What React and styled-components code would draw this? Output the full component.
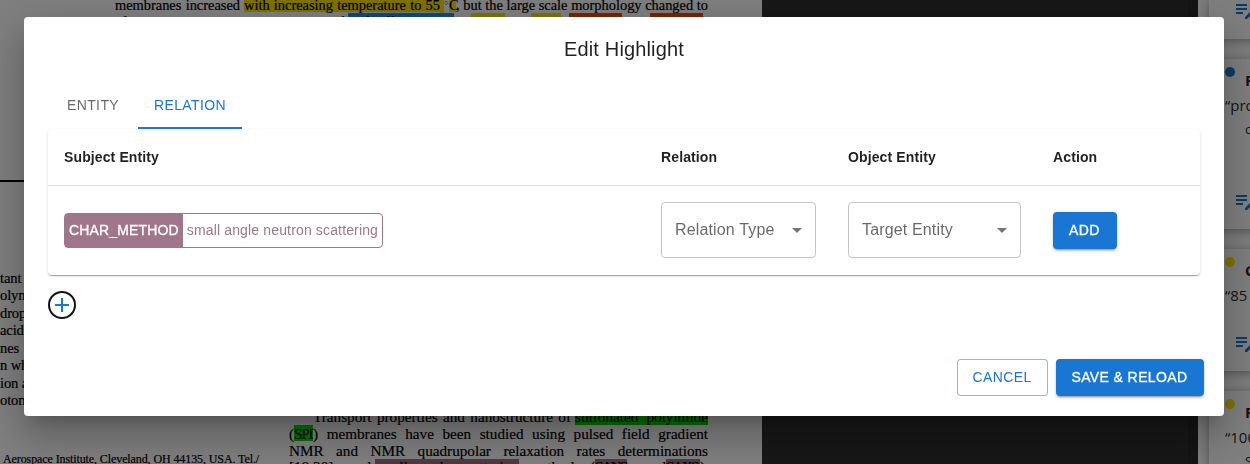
import React from "react";
import styled, { createGlobalStyle } from "styled-components";

const GlobalStyle = createGlobalStyle`
  *, *::before, *::after { box-sizing: border-box; }
  body {
    margin: 0;
    overflow: hidden;
    font-family: "Liberation Sans", Arial, sans-serif;
    color: rgba(0, 0, 0, 0.87);
  }
`;

/* ---------- document viewer behind the dialog ---------- */

const Workspace = styled.div`
  display: flex;
  height: 464px;
  overflow: hidden;
`;

const PaperPage = styled.div`
  flex: none;
  display: flex;
  flex-direction: column;
  width: 762px;
  height: 464px;
  overflow: hidden;
  background: #fff;
  color: #000;
  font-family: "Liberation Serif", "Times New Roman", serif;
  font-size: 14.4px;
  -webkit-text-stroke: 0.2px #000;
`;

const Abstract = styled.div`
  flex: none;
  width: 600px;
  height: 180px;
  margin-left: 115px;
  overflow: hidden;
`;

const Rule = styled.div`
  flex: none;
  height: 2px;
  background: #000;
`;

const Columns = styled.div`
  display: flex;
  justify-content: space-between;
  width: 708px;
`;

const LeftColumn = styled.div`
  width: 260px;
  padding-top: 87px;
  font-size: 14.6px;
`;

const RightColumn = styled.div`
  width: 419px;
  padding-top: 226px;
  font-size: 15.2px;
`;

const Line = styled.div`
  display: flex;
  height: ${(p) => p.$h || 17}px;
  line-height: ${(p) => p.$lh || 17}px;
  padding-left: ${(p) => p.$indent || 0}px;
  white-space: nowrap;
`;

const Seg = styled.span`
  flex: none;
  width: ${(p) => p.$w}px;
  height: ${(p) => p.$mh || 17}px;
  white-space: pre-wrap;
  text-align: justify;
  text-align-last: justify;
  letter-spacing: ${(p) => p.$ls || 0}px;
  background: ${(p) => p.$mark || "none"};
`;

const Degree = styled(Seg)`
  font-size: 7px;
  line-height: 7px;
  -webkit-text-stroke: 0;
`;

const Fragment = styled.div`
  height: 17.45px;
  line-height: 18.5px;
  white-space: pre;
  letter-spacing: -0.15px;
`;

const Affiliation = styled.div`
  margin-top: 42px;
  padding-left: 3px;
  width: 259px;
  font-size: 12px;
  letter-spacing: -0.1px;
  line-height: 17px;
  white-space: nowrap;
`;

const ViewerGutter = styled.div`
  flex: none;
  width: 436px;
  background: linear-gradient(90deg, #2e2e2e 426px, #282828 426px);
`;

const Sidebar = styled.div`
  flex: 1;
  display: flex;
  flex-direction: column;
  gap: 20px;
  padding-left: 11px;
  background: #fff;
  overflow: hidden;
  font-family: "Open Sans", "Noto Sans", sans-serif;
`;

const NoteCard = styled.div`
  flex: none;
  display: flex;
  flex-direction: column;
  width: 200px;
  height: ${(p) => p.$h}px;
  padding: 8px 0 0 16px;
  background: #fff;
  box-shadow: 0 2px 10px rgba(0, 0, 0, 0.36);
  overflow: hidden;
`;

const NoteDot = styled.div`
  flex: none;
  width: 10px;
  height: 10px;
  border-radius: 50%;
  background: ${(p) => p.$color};
`;

const NoteType = styled.div`
  padding-left: 20px;
  margin-top: -7px;
  font-size: 15px;
  font-weight: 700;
  line-height: 20px;
`;

const NoteQuote = styled.div`
  margin-top: 5px;
  font-size: 15px;
  line-height: 20px;
`;

const NoteMeta = styled.div`
  margin-top: 5px;
  padding-left: 20px;
  font-size: 13px;
  line-height: 18px;
`;

const NoteIcon = styled.svg`
  display: block;
  flex: none;
  width: 24px;
  height: 24px;
  margin: ${(p) => p.$top}px 0 0 8px;
  fill: #1976d2;
`;

/* ---------- dialog ---------- */

const Backdrop = styled.div`
  position: fixed;
  inset: 0;
  display: flex;
  align-items: flex-start;
  padding: 17px 26px 0 24px;
  background: rgba(0, 0, 0, 0.5);
`;

const Dialog = styled.div`
  display: flex;
  flex-direction: column;
  width: 1200px;
  height: 399px;
  border-radius: 4px;
  background: #fff;
  box-shadow:
    0 11px 15px -7px rgba(0, 0, 0, 0.2),
    0 24px 38px 3px rgba(0, 0, 0, 0.14),
    0 9px 46px 8px rgba(0, 0, 0, 0.12);
`;

const Title = styled.h2`
  margin: 0;
  padding: 16px 24px;
  font-size: 20px;
  font-weight: 400;
  line-height: 32px;
  letter-spacing: 0.15px;
  text-align: center;
`;

const Content = styled.div`
  flex: 1;
  padding: 0 24px;
`;

const Tabs = styled.div`
  display: flex;
  height: 48px;
`;

const Tab = styled.button`
  width: ${(p) => p.$w}px;
  padding: 2px 0 0;
  border: 0;
  border-bottom: 2px solid ${(p) => (p.$active ? "#1976d2" : "transparent")};
  background: none;
  color: ${(p) => (p.$active ? "#1976d2" : "rgba(0, 0, 0, 0.6)")};
  font: 400 14px/20px "Liberation Sans", Arial, sans-serif;
  letter-spacing: 0.4px;
`;

const TableCard = styled.div`
  border-radius: 4px;
  background: #fff;
  box-shadow:
    0 2px 1px -1px rgba(0, 0, 0, 0.2),
    0 1px 1px 0 rgba(0, 0, 0, 0.14),
    0 1px 3px 0 rgba(0, 0, 0, 0.12);
`;

const Row = styled.div`
  display: grid;
  grid-template-columns: 597px 187px 205px 163px;
  align-items: center;
  height: ${(p) => (p.$head ? 57 : 89)}px;
  border-bottom: ${(p) => (p.$head ? "1px solid #e0e0e0" : "0")};
`;

const HeadCell = styled.div`
  padding: 0 16px;
  font-size: 14px;
  font-weight: 700;
  line-height: 24px;
  letter-spacing: 0.12px;
`;

const Cell = styled.div`
  display: flex;
  align-items: center;
  height: 88px;
  padding: 0 16px;
  align-self: start;
`;

const EntityChip = styled.div`
  display: flex;
  height: 35px;
  margin-top: 1px;
  border: 1px solid #a0768a;
  border-radius: 4px;
  color: #a0768a;
  font-size: 14px;
  line-height: 33px;
  letter-spacing: 0.15px;
  white-space: nowrap;
`;

const ChipLabel = styled.span`
  padding: 0 4px;
  background: #a0768a;
  color: #fff;
  -webkit-text-stroke: 0.3px #fff;
`;

const ChipText = styled.span`
  padding: 0 4px;
`;

const Select = styled.div`
  display: flex;
  align-items: center;
  justify-content: space-between;
  width: ${(p) => p.$w}px;
  height: 56px;
  padding: 0 6px 0 13px;
  border: 1px solid rgba(0, 0, 0, 0.23);
  border-radius: 4px;
  color: rgba(0, 0, 0, 0.6);
  font-size: 16px;
  letter-spacing: 0.15px;
  white-space: nowrap;
`;

const Arrow = styled.svg`
  width: 24px;
  height: 24px;
  fill: rgba(0, 0, 0, 0.54);
`;

const Button = styled.button`
  width: ${(p) => p.$w}px;
  height: 37px;
  padding: 0 1px ${(p) => (p.$compact ? 0 : 2)}px 0;
  border: ${(p) => (p.$outlined ? "1px solid rgba(25, 118, 210, 0.5)" : "0")};
  border-radius: 4px;
  background: ${(p) => (p.$outlined ? "#fff" : "#1976d2")};
  color: ${(p) => (p.$outlined ? "#1976d2" : "#fff")};
  font: 400 14px/24px "Liberation Sans", Arial, sans-serif;
  letter-spacing: 0.4px;
  white-space: nowrap;
  -webkit-text-stroke: ${(p) => (p.$outlined ? "0" : "0.3px #fff")};
  box-shadow: ${(p) =>
    p.$outlined
      ? "none"
      : "0 3px 1px -2px rgba(0,0,0,.2), 0 2px 2px 0 rgba(0,0,0,.14), 0 1px 5px 0 rgba(0,0,0,.12)"};
`;

const AddRow = styled.button`
  display: flex;
  align-items: center;
  justify-content: center;
  width: 28px;
  height: 28px;
  margin-top: 16px;
  padding: 0;
  border: 2px solid #101418;
  border-radius: 50%;
  background: #fff;
`;

const Actions = styled.div`
  display: flex;
  justify-content: flex-end;
  gap: 8px;
  padding: 20px;
`;

const YELLOW = "#ffe600";
const BLUE = "#1e90ff";
const ORANGE = "#ff4500";
const GREEN = "#00e000";
const MAUVE = "#a0768a";

const fragments = ["tant", "olyn", "drop", "acidi", "nes  i", "n wh", "ion a", "oton"];

const EditNote = ({ top }) => (
  <NoteIcon $top={top} viewBox="0 0 24 24">
    <path d="M3 10h11v2H3v-2zm0-2h11V6H3v2zm0 8h7v-2H3v2zm15.01-3.13.71-.71c.39-.39 1.02-.39 1.41 0l.71.71c.39.39.39 1.02 0 1.41l-.71.71-2.12-2.12zm-.71.71-5.3 5.3V21h2.12l5.3-5.3-2.12-2.12z" />
  </NoteIcon>
);

const Dropdown = ({ label, width }) => (
  <Select $w={width}>
    {label}
    <Arrow viewBox="0 0 24 24">
      <path d="M7 10l5 5 5-5z" />
    </Arrow>
  </Select>
);

const Document = () => (
  <PaperPage>
    <Abstract>
      <Line $h={13} $lh={10}>
        <Seg $w={125}>membranes increased</Seg>
        <Seg $w={4} />
        <Seg $w={196} $mh={12} $mark={YELLOW}>with increasing temperature to 55</Seg>
        <Seg $w={4} $mh={13} $mark={YELLOW} />
        <Degree $w={5}>○</Degree>
        <Seg $w={7} $mh={12} $ls={-3} $mark={YELLOW}>C</Seg>
        <Seg $w={252}>, but the large scale morphology changed to</Seg>
      </Line>
      <Line $h={20} $lh={18}>
        <Seg $w={229}>after the reach. During the course of the</Seg>
        <Seg $w={4} />
        <Seg $w={106} $mark={BLUE}>self-diffusion ion</Seg>
        <Seg $w={17} />
        <Seg $w={34} $ls={-0.5} $mark={YELLOW}>55.2%</Seg>
        <Seg $w={26}> and</Seg>
        <Seg $w={30} $ls={-1.4} $mark={YELLOW}>71.8%</Seg>
        <Seg $w={8}> (</Seg>
        <Seg $w={53} $mark={ORANGE} $ls={-1.8}>SPTES-70</Seg>
        <Seg $w={28}> and</Seg>
        <Seg $w={53} $mark={ORANGE} $ls={-1.8}>SPTES-80</Seg>
        <Seg $w={5}>)</Seg>
      </Line>
    </Abstract>
    <Rule />
    <Columns>
      <LeftColumn>
        {fragments.map((text) => (
          <Fragment key={text}>{text}</Fragment>
        ))}
        <Affiliation>Aerospace Institute, Cleveland, OH 44135, USA. Tel./</Affiliation>
      </LeftColumn>
      <RightColumn>
        <Line $indent={24}>
          <Seg $w={258}>Transport properties and nanostructure of</Seg>
          <Seg $w={4} />
          <Seg $w={133} $mark={GREEN}>sulfonated polyimide</Seg>
        </Line>
        <Line>
          <Seg $w={5}>(</Seg>
          <Seg $w={19} $mark={GREEN} $mh={16} $ls={-1.2}>SPI</Seg>
          <Seg $w={395}>) membranes have been studied using pulsed field gradient</Seg>
        </Line>
        <Line>
          <Seg $w={419}>NMR and NMR quadrupolar relaxation rates determinations</Seg>
        </Line>
        <Line $lh={16}>
          <Seg $w={82}>[19,20] and</Seg>
          <Seg $w={4} />
          <Seg $w={144} $mark={MAUVE}>small angle scattering</Seg>
          <Seg $w={76}> methods (</Seg>
          <Seg $w={32} $mark={MAUVE} $ls={-1.8}>SANS</Seg>
          <Seg $w={39}> and</Seg>
          <Seg $w={34} $mark={MAUVE} $ls={-1.8}>SAXS</Seg>
          <Seg $w={5}>)</Seg>
        </Line>
      </RightColumn>
    </Columns>
  </PaperPage>
);

const Notes = () => (
  <Sidebar>
    <NoteCard $h={39}>
      <EditNote top={-10} />
    </NoteCard>
    <NoteCard $h={170}>
      <NoteDot $color="#1976d2" />
      <NoteType>PROPERTY</NoteType>
      <NoteQuote>“proton conductivity”</NoteQuote>
      <NoteMeta>conductivity</NoteMeta>
      <EditNote top={51} />
    </NoteCard>
    <NoteCard $h={122}>
      <NoteDot $color={YELLOW} />
      <NoteType>CONDITION</NoteType>
      <NoteQuote>“85 °C”</NoteQuote>
      <EditNote top={26} />
    </NoteCard>
    <NoteCard $h={170}>
      <NoteDot $color={YELLOW} />
      <NoteType>PROPERTY VALUE</NoteType>
      <NoteQuote>“100 mS/cm”</NoteQuote>
      <NoteMeta>S/cm</NoteMeta>
    </NoteCard>
  </Sidebar>
);

export default function App() {
  return (
    <>
      <GlobalStyle />
      <Workspace>
        <Document />
        <ViewerGutter />
        <Notes />
      </Workspace>
      <Backdrop>
        <Dialog>
          <Title>Edit Highlight</Title>
          <Content>
            <Tabs>
              <Tab $w={90}>ENTITY</Tab>
              <Tab $w={104} $active>RELATION</Tab>
            </Tabs>
            <TableCard>
              <Row $head>
                <HeadCell>Subject Entity</HeadCell>
                <HeadCell>Relation</HeadCell>
                <HeadCell>Object Entity</HeadCell>
                <HeadCell>Action</HeadCell>
              </Row>
              <Row>
                <Cell>
                  <EntityChip>
                    <ChipLabel>CHAR_METHOD</ChipLabel>
                    <ChipText>small angle neutron scattering</ChipText>
                  </EntityChip>
                </Cell>
                <Cell>
                  <Dropdown label="Relation Type" width={155} />
                </Cell>
                <Cell>
                  <Dropdown label="Target Entity" width={173} />
                </Cell>
                <Cell>
                  <Button $w={64} $compact>ADD</Button>
                </Cell>
              </Row>
            </TableCard>
            <AddRow aria-label="Add relation">
              <svg width="24" height="24" viewBox="0 0 24 24">
                <path d="M12 5v14M5 12h14" stroke="#1976d2" strokeWidth="2" />
              </svg>
            </AddRow>
          </Content>
          <Actions>
            <Button $w={91} $outlined>CANCEL</Button>
            <Button $w={148}>SAVE &amp; RELOAD</Button>
          </Actions>
        </Dialog>
      </Backdrop>
    </>
  );
}
